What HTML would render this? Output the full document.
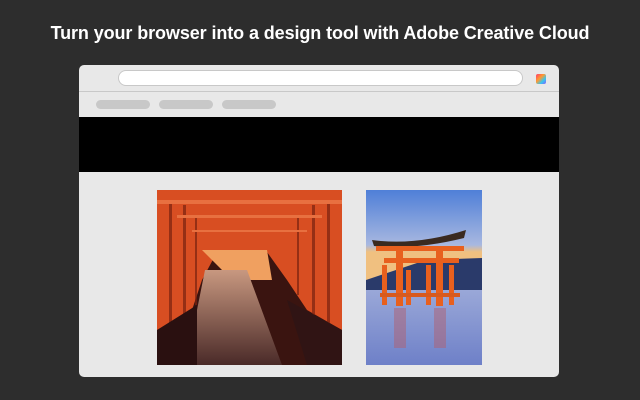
<!DOCTYPE html>
<html><head><style>
body{margin:0;width:640px;height:400px;background:#2d2d2d;position:relative;overflow:hidden;font-family:"Liberation Sans",sans-serif}
h1{position:absolute;top:23px;left:0;width:640px;text-align:center;margin:0;color:#fff;font-size:18px;font-weight:bold;letter-spacing:-0.1px}
.win{position:absolute;left:79px;top:65px;width:480px;height:312px;background:#e8e8e8;border-radius:5px;overflow:hidden}
.bar{position:absolute;left:39px;top:5px;width:405px;height:16px;background:#fff;border:1px solid #c8c8c8;border-radius:9px;box-sizing:border-box}
.line{position:absolute;left:0;top:26px;width:480px;height:1px;background:#c8c8c8}
.tab{position:absolute;top:35px;width:54px;height:9px;background:#c8c8c8;border-radius:5px}
.blk{position:absolute;left:0;top:52px;width:480px;height:55px;background:#000}
.ic{position:absolute;left:457px;top:9px;width:10px;height:10px;border-radius:2px;background:linear-gradient(135deg,#ff3a6e,#ff9a2e 40%,#36c5f0 70%,#8a5cff)}
</style></head><body>
<h1>Turn your browser into a design tool with Adobe Creative Cloud</h1>
<div class="win">
<div class="bar"></div><div class="ic"></div><div class="line"></div>
<div class="tab" style="left:17px"></div><div class="tab" style="left:80px"></div><div class="tab" style="left:143px"></div>
<div class="blk"></div>
<svg style="position:absolute;left:78px;top:125px" width="185" height="175">
<defs><linearGradient id="p" x1="0" y1="0" x2="0" y2="1"><stop offset="0" stop-color="#c89880"/><stop offset="1" stop-color="#4a2a28"/></linearGradient></defs>
<rect width="185" height="175" fill="#3a1410"/>
<rect x="0" y="0" width="185" height="60" fill="#a8381e"/>
<polygon points="0,0 185,0 185,140 150,120 130,90 110,62 60,62 45,90 35,120 0,150" fill="#d84e22"/>
<g fill="#7a2210" opacity="0.7">
<rect x="12" y="10" width="3" height="140"/><rect x="26" y="15" width="3" height="120"/><rect x="38" y="25" width="2" height="90"/>
<rect x="170" y="10" width="3" height="130"/><rect x="155" y="15" width="3" height="110"/><rect x="140" y="25" width="2" height="80"/>
</g>
<rect x="0" y="10" width="185" height="4" fill="#e87040"/>
<rect x="20" y="25" width="145" height="3" fill="#e87040"/>
<rect x="35" y="40" width="115" height="2" fill="#e87040"/>
<polygon points="45,60 110,60 115,90 75,90" fill="#f0a060"/>
<polygon points="48,80 90,80 125,175 40,175 40,120" fill="url(#p)"/>
<polygon points="0,140 40,115 40,175 0,175" fill="#2a1010"/>
<polygon points="185,140 130,110 150,175 185,175" fill="#301414"/>
</svg>
<svg style="position:absolute;left:287px;top:125px" width="116" height="175">
<defs><linearGradient id="s" x1="0" y1="0" x2="0" y2="1"><stop offset="0" stop-color="#4f7fd8"/><stop offset="0.55" stop-color="#a8b8e0"/><stop offset="0.62" stop-color="#f0c080"/></linearGradient>
<linearGradient id="w" x1="0" y1="0" x2="0" y2="1"><stop offset="0" stop-color="#9aa8d8"/><stop offset="1" stop-color="#6e80c8"/></linearGradient></defs>
<rect width="116" height="100" fill="url(#s)"/>
<polygon points="0,90 30,80 60,70 116,68 116,100 0,100" fill="#2a3a6a"/>
<rect y="100" width="116" height="75" fill="url(#w)"/>
<path d="M6,50 Q50,56 100,40 L98,48 Q50,60 8,56Z" fill="#3a2a20"/>
<rect x="10" y="56" width="88" height="5" fill="#e8601e"/>
<rect x="18" y="68" width="75" height="5" fill="#e8601e"/>
<rect x="30" y="56" width="7" height="60" fill="#e8601e"/><rect x="70" y="56" width="7" height="60" fill="#e8601e"/>
<rect x="16" y="75" width="5" height="40" fill="#e8601e"/><rect x="40" y="80" width="5" height="35" fill="#e8601e"/>
<rect x="60" y="75" width="5" height="40" fill="#e8601e"/><rect x="83" y="75" width="5" height="40" fill="#e8601e"/>
<rect x="14" y="103" width="80" height="4" fill="#d85a1e"/>
<rect x="28" y="118" width="12" height="40" fill="#b06070" opacity="0.5"/><rect x="68" y="118" width="12" height="40" fill="#b06070" opacity="0.5"/>
</svg>
</div>
</body></html>
